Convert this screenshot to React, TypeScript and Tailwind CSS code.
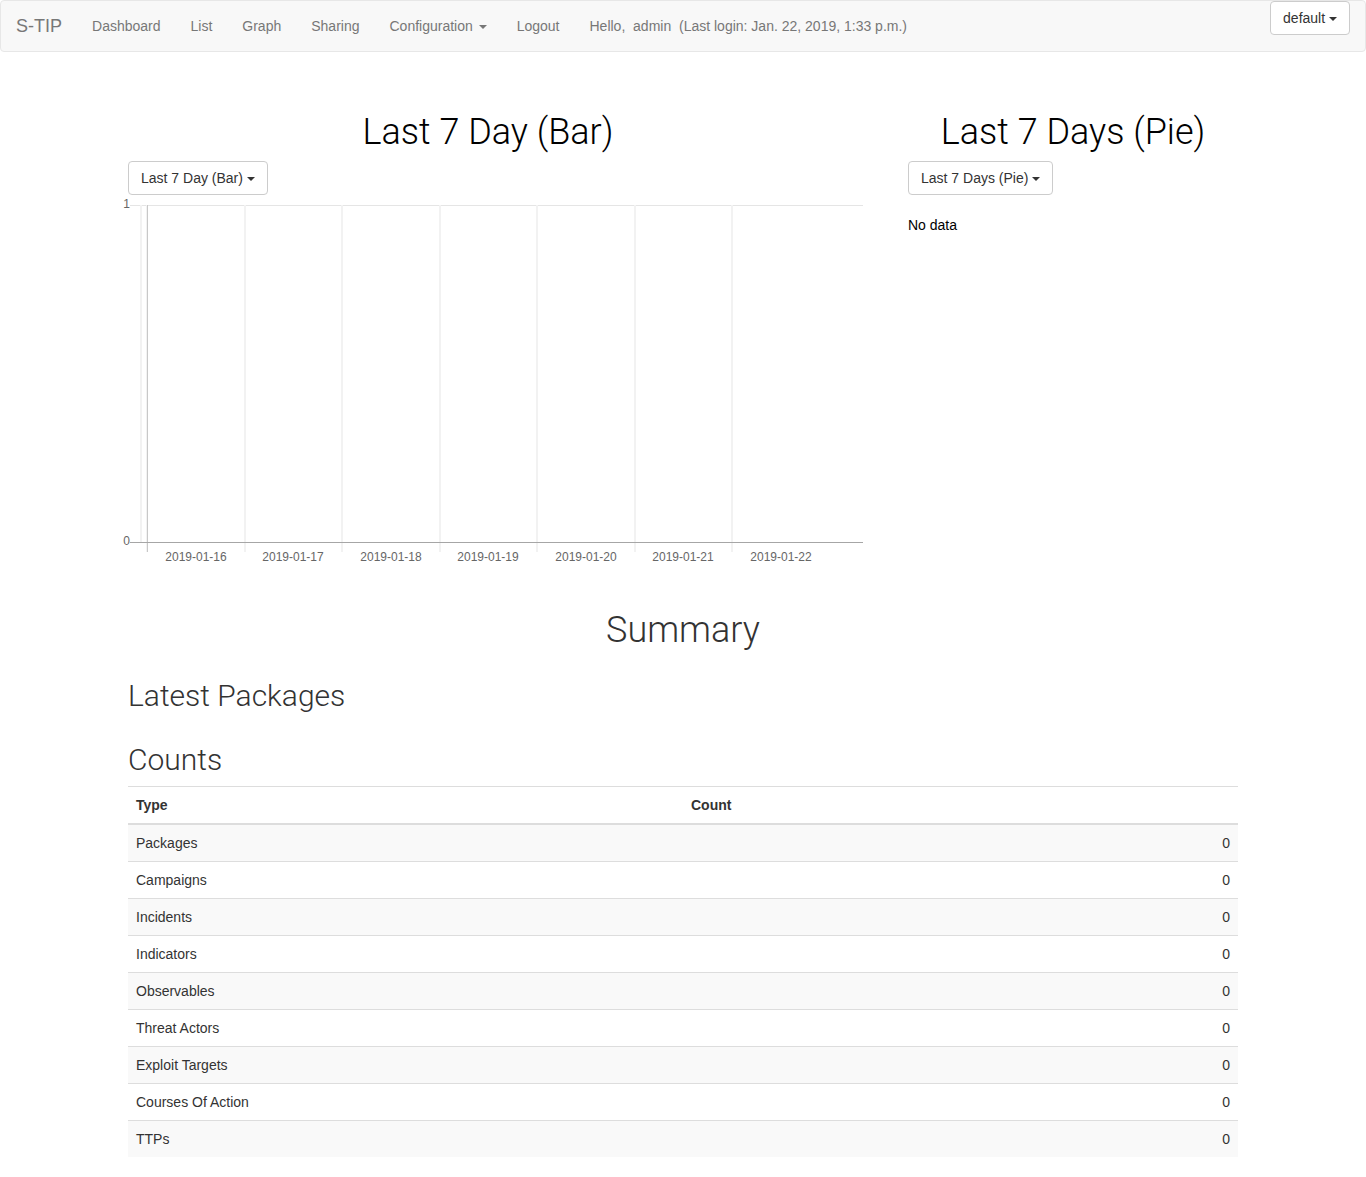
import type { ReactNode } from 'react';

const H1 = "font-['Roboto'] font-light text-center text-4xl";
const H2 = "font-['Roboto'] font-light mt-7 text-3xl leading-9";

const COUNTS = [
  { type: 'Packages', count: 0 },
  { type: 'Campaigns', count: 0 },
  { type: 'Incidents', count: 0 },
  { type: 'Indicators', count: 0 },
  { type: 'Observables', count: 0 },
  { type: 'Threat Actors', count: 0 },
  { type: 'Exploit Targets', count: 0 },
  { type: 'Courses Of Action', count: 0 },
  { type: 'TTPs', count: 0 },
];

const DAYS = [
  { label: '2019-01-16', line: 34, text: 83 },
  { label: '2019-01-17', line: 132, text: 180 },
  { label: '2019-01-18', line: 229, text: 278 },
  { label: '2019-01-19', line: 327, text: 375 },
  { label: '2019-01-20', line: 424, text: 473 },
  { label: '2019-01-21', line: 522, text: 570 },
  { label: '2019-01-22', line: 619, text: 668 },
];

function Caret() {
  return (
    <span
      aria-hidden="true"
      className="inline-block border-x-4 border-t-4 border-x-transparent border-t-current align-middle"
    />
  );
}

function DropdownButton({ label }: { label: string }) {
  return (
    <button
      type="button"
      aria-haspopup="menu"
      className="rounded-[4px] border border-[#ccc] bg-white px-3 py-1.5 text-sm leading-5 text-[#333]"
    >
      {label} <Caret />
    </button>
  );
}

function NavLink({ children }: { children: ReactNode }) {
  return (
    <a href="#" className="px-[15px] py-[15px] text-sm leading-5">
      {children}
    </a>
  );
}

function Navbar() {
  return (
    <nav className="flex items-start justify-between rounded-[4px] border border-[#e7e7e7] bg-[#f8f8f8] pr-[15px] text-[#777]">
      <div className="flex flex-wrap">
        <a href="#" className="px-[15px] py-[15px] text-lg leading-5">
          S-TIP
        </a>
        <NavLink>Dashboard</NavLink>
        <NavLink>List</NavLink>
        <NavLink>Graph</NavLink>
        <NavLink>Sharing</NavLink>
        <NavLink>
          Configuration <span className="ml-0.5"><Caret /></span>
        </NavLink>
        <NavLink>Logout</NavLink>
        <p className="px-[15px] py-[15px] text-sm leading-5">
          Hello,&nbsp; admin&nbsp; (Last login: Jan. 22, 2019, 1:33 p.m.)
        </p>
      </div>
      <DropdownButton label="default" />
    </nav>
  );
}

function BarChart() {
  return (
    <svg viewBox="0 0 750 375" className="block h-auto w-full" role="img" aria-label="Last 7 Day (Bar)">
      <g fill="none" strokeWidth="1">
        <path d="M17 10.5H750" stroke="#e5e5e5" />
        <path d="M28 10V348" stroke="#f2f2f2" strokeWidth="2" />
        {DAYS.map((d) => (
          <path key={d.label} d={`M${d.line} 10V357`} strokeWidth="2" stroke="#f2f2f2" />
        ))}
        <path d="M34.5 10V357" stroke="#c8c8c8" />
        <path d="M17 347.5H750" stroke="#a6a6a6" />
      </g>
      <g className="font-['Liberation_Sans'] text-[12px]" fill="#666">
        <text x="17" y="13" textAnchor="end">1</text>
        <text x="17" y="350" textAnchor="end">0</text>
        {DAYS.map((d) => (
          <text key={d.label} x={d.text} y="366" textAnchor="middle">
            {d.label}
          </text>
        ))}
      </g>
    </svg>
  );
}

function CountsTable() {
  return (
    <table className="w-full table-fixed border-collapse text-sm leading-5">
      <thead>
        <tr className="border-t border-b-2 border-[#ddd]">
          <th scope="col" className="p-2 text-left font-bold">Type</th>
          <th scope="col" className="p-2 text-left font-bold">Count</th>
        </tr>
      </thead>
      <tbody>
        {COUNTS.map((row) => (
          <tr key={row.type} className="border-t border-[#ddd] odd:bg-[#f9f9f9]">
            <td className="p-2">{row.type}</td>
            <td className="p-2 text-right">{row.count}</td>
          </tr>
        ))}
      </tbody>
    </table>
  );
}

export default function App() {
  return (
    <div className="min-h-screen bg-white pb-5 font-['Liberation_Sans',Arial,sans-serif] text-[#333]">
      <Navbar />
      <main className="mx-auto max-w-[1140px] px-[15px] pt-[60px]">
        <div className="grid grid-cols-[24fr_11fr] gap-[60px] text-black">
          <section>
            <h1 className={`${H1} mb-2 leading-[41px]`}>Last 7 Day (Bar)</h1>
            <DropdownButton label="Last 7 Day (Bar)" />
            <div className="-mx-[15px]">
              <BarChart />
            </div>
          </section>
          <section>
            <h1 className={`${H1} mb-2 leading-[41px]`}>Last 7 Days (Pie)</h1>
            <DropdownButton label="Last 7 Days (Pie)" />
            <p className="mt-5 text-sm leading-5">No data</p>
          </section>
        </div>
        <section className="mt-10">
          <h1 className={`${H1} leading-10`}>Summary</h1>
          <h2 className={H2}>Latest Packages</h2>
          <h2 className={`${H2} mb-2`}>Counts</h2>
          <CountsTable />
        </section>
      </main>
    </div>
  );
}
